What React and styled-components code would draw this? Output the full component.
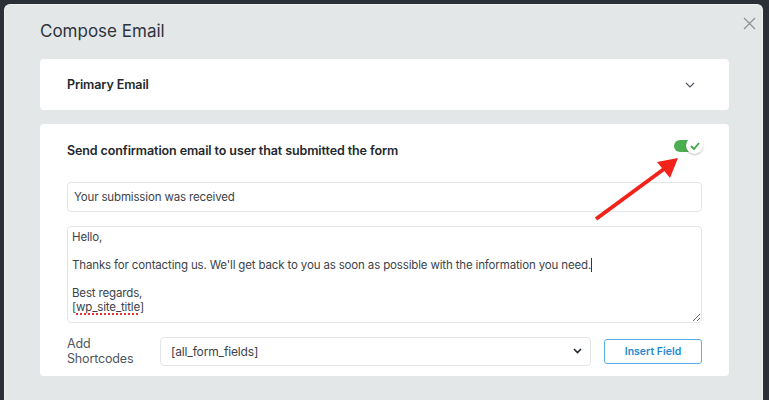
import React from "react";
import styled, { createGlobalStyle } from "styled-components";

const GlobalStyle = createGlobalStyle`
    html, body {
        margin: 0;
        padding: 0;
        background: #2b2f37;
        height: 400px;
        overflow: hidden;
    }
    * {
        box-sizing: border-box;
    }
`;

const Page = styled.div`
    position: relative;
    padding: 4px 6px 0 4px;
    font-family: Inter, "Noto Sans", sans-serif;
`;

const Modal = styled.div`
    position: relative;
    width: 759px;
    height: 396px;
    background: #e4e7e8;
    border: 1px solid #eef0f1;
    border-bottom: 0;
    border-radius: 6px 6px 0 0;
    padding: 14px 33px 0 35px;
`;

const Title = styled.h2`
    margin: 0;
    font-size: 17px;
    line-height: 24px;
    font-weight: 400;
    color: #2d3440;
`;

const CloseButton = styled.button`
    position: absolute;
    top: 8px;
    right: 3px;
    width: 20px;
    height: 20px;
    padding: 0;
    border: 0;
    background: none;
    display: flex;
    align-items: center;
    justify-content: center;
`;

const Stack = styled.div`
    display: flex;
    flex-direction: column;
    gap: 14px;
    margin-top: 16px;
`;

const Card = styled.div`
    background: #fff;
    border-radius: 4px;
    padding: ${(p) => p.$pad || "0 27px"};
`;

const CardHeader = styled.div`
    display: flex;
    align-items: center;
    justify-content: space-between;
    height: ${(p) => p.$h || "51px"};
`;

const CardTitle = styled.div`
    font-size: 12.5px;
    letter-spacing: -0.1px;
    font-weight: 600;
    color: #23282d;
`;

const Chevron = styled.span`
    display: flex;
    margin-right: 7px;
`;

const Toggle = styled.div`
    position: relative;
    width: 28px;
    height: 12px;
    border-radius: 6px;
    background: #4cae50;
    margin-top: -8px;
`;

const Knob = styled.div`
    position: absolute;
    right: -1px;
    top: -3px;
    width: 17px;
    height: 17px;
    border-radius: 50%;
    background: #fff;
    box-shadow: 0 1px 2px rgba(0, 0, 0, 0.25);
    display: flex;
    align-items: center;
    justify-content: center;
`;

const Field = styled.div`
    height: 30px;
    border: 1px solid #e3e6e8;
    border-radius: 4px;
    padding: 0 6px;
    display: flex;
    align-items: center;
    font-size: 11.5px;
    letter-spacing: -0.15px;
    color: #3c434a;
    margin-top: 24px;
`;

const TextArea = styled.div`
    height: 97px;
    margin-top: 14px;
    border: 1px solid #e3e6e8;
    border-radius: 4px;
    padding: 4px 4px;
    font-size: 11.5px;
    letter-spacing: -0.15px;
    line-height: 13.7px;
    color: #3c434a;
    white-space: pre-wrap;
    resize: vertical;
    overflow: auto;
`;

const Misspelled = styled.span`
    text-decoration: underline dotted #e0322f;
    text-decoration-thickness: 1.5px;
    text-underline-offset: 3px;
`;

const Caret = styled.span`
    display: inline-block;
    width: 1px;
    height: 14px;
    background: #333;
    vertical-align: -3px;
`;

const ShortcodeRow = styled.div`
    display: flex;
    align-items: center;
    margin-top: 13px;
`;

const Label = styled.div`
    width: 93px;
    font-size: 12.5px;
    letter-spacing: -0.15px;
    line-height: 15px;
    color: #50575e;
`;

const Select = styled.div`
    width: 431px;
    height: 29px;
    border: 1px solid #e3e6e8;
    border-radius: 4px;
    padding: 0 8px 0 10px;
    display: flex;
    align-items: center;
    justify-content: space-between;
    font-size: 12px;
    letter-spacing: -0.15px;
    color: #3c434a;
`;

const InsertButton = styled.button`
    margin-left: 13px;
    width: 98px;
    height: 25px;
    border: 1px solid #5aaee9;
    border-radius: 3px;
    background: #fff;
    color: #1f8ad2;
    font-family: inherit;
    font-size: 10.5px;
    font-weight: 600;
`;

const Arrow = styled.svg`
    position: absolute;
    left: 590px;
    top: 152px;
    pointer-events: none;
`;

const App = () => {
    return (
        <Page>
            <GlobalStyle />
            <Modal>
                <Title>Compose Email</Title>
                <CloseButton>
                    <svg width="13" height="13" viewBox="0 0 13 13">
                        <path
                            d="M1 1L12 12M12 1L1 12"
                            stroke="#8b9095"
                            strokeWidth="1.2"
                        />
                    </svg>
                </CloseButton>
                <Stack>
                    <Card>
                        <CardHeader>
                            <CardTitle>Primary Email</CardTitle>
                            <Chevron>
                                <svg width="10" height="6" viewBox="0 0 10 6">
                                    <path
                                        d="M1 1L5 5L9 1"
                                        fill="none"
                                        stroke="#50575e"
                                        strokeWidth="1.2"
                                    />
                                </svg>
                            </Chevron>
                        </CardHeader>
                    </Card>
                    <Card $pad="18px 27px 10px">
                        <CardHeader $h="16px">
                            <CardTitle>
                                Send confirmation email to user that submitted
                                the form
                            </CardTitle>
                            <Toggle>
                                <Knob>
                                    <svg width="10" height="8" viewBox="0 0 10 8">
                                        <path
                                            d="M1 4L4 7L9 1"
                                            fill="none"
                                            stroke="#3fa845"
                                            strokeWidth="1.8"
                                        />
                                    </svg>
                                </Knob>
                            </Toggle>
                        </CardHeader>
                        <Field>Your submission was received</Field>
                        <TextArea>
                            {"Hello,\n\nThanks for contacting us. We'll get back to you as soon as possible with the information you need"}
                            .<Caret />
                            {"\n\nBest regards,\n"}
                            [<Misspelled>wp_site_title</Misspelled>]
                        </TextArea>
                        <ShortcodeRow>
                            <Label>
                                Add
                                <br />
                                Shortcodes
                            </Label>
                            <Select>
                                <span>[all_form_fields]</span>
                                <svg width="9" height="6" viewBox="0 0 9 6">
                                    <path
                                        d="M1 1L4.5 4.5L8 1"
                                        fill="none"
                                        stroke="#23282d"
                                        strokeWidth="1.6"
                                    />
                                </svg>
                            </Select>
                            <InsertButton>Insert Field</InsertButton>
                        </ShortcodeRow>
                    </Card>
                </Stack>
            </Modal>
            <Arrow width="100" height="75" viewBox="0 0 100 75">
                <line
                    x1="6"
                    y1="67"
                    x2="74"
                    y2="17"
                    stroke="#f2231a"
                    strokeWidth="4"
                />
                <polygon points="88,6 67,10 80,26" fill="#f2231a" />
            </Arrow>
        </Page>
    );
};

export default App;
